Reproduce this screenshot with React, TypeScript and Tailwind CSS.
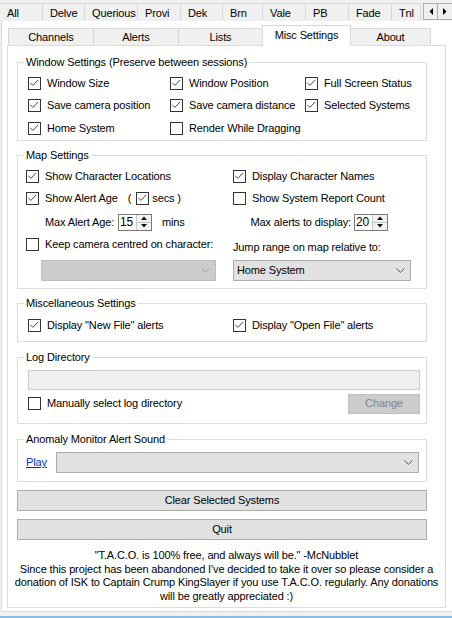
import React from "react";

const topTabs = [
  { label: "All", cls: "w-[43px]" },
  { label: "Delve", cls: "w-[42px]" },
  { label: "Querious", cls: "w-[53px]" },
  { label: "Provi", cls: "w-[43px]" },
  { label: "Dek", cls: "w-[42px]" },
  { label: "Brn", cls: "w-[40px]" },
  { label: "Vale", cls: "w-[43px]" },
  { label: "PB", cls: "w-[43px]" },
  { label: "Fade", cls: "w-[43px]" },
  { label: "Tnl", cls: "w-[29px]" },
];

function Check({ checked, label, className }: { checked?: boolean; label: string; className?: string }) {
  return (
    <div className={"flex items-center " + (className ?? "")}>
      <span className="flex h-[13px] w-[13px] shrink-0 border border-[#333333] bg-white">
        {checked && (
          <svg width="11" height="11" viewBox="0 0 11 11">
            <path d="M1.3 4.8 L3.9 7.4 L9.2 1.9" fill="none" stroke="#444444" strokeWidth="1" />
          </svg>
        )}
      </span>
      <span className="ml-[6px] whitespace-nowrap">{label}</span>
    </div>
  );
}

function Group({ title, className, children }: { title: string; className?: string; children: React.ReactNode }) {
  return (
    <fieldset className={"ml-[9px] w-[410px] border border-[#dcdcdc] " + (className ?? "")}>
      <legend className="ml-[6px] px-[2px] leading-[13px]">{title}</legend>
      {children}
    </fieldset>
  );
}

function Chevron({ color }: { color: string }) {
  return (
    <svg width="9" height="5" viewBox="0 0 9 5">
      <path d="M0.5 0.5 L4.5 4.3 L8.5 0.5" fill="none" stroke={color} strokeWidth="1" />
    </svg>
  );
}

function Spin({ value }: { value: string }) {
  return (
    <div className="flex h-[17px] w-[34px] shrink-0 border border-[#7a7a7a] bg-white">
      <span className="flex-1 pl-[1px] text-[12px] leading-[15px]">{value}</span>
      <div className="flex w-[15px] flex-col border-l border-[#c8c8c8]">
        <span className="flex flex-1 items-center justify-center border-b border-[#c8c8c8] bg-[#f2f2f2]">
          <svg width="6" height="4" viewBox="0 0 6 4">
            <path d="M0 4 L3 0.5 L6 4 Z" fill="#111" />
          </svg>
        </span>
        <span className="flex flex-1 items-center justify-center bg-[#f2f2f2]">
          <svg width="6" height="4" viewBox="0 0 6 4">
            <path d="M0 0 L3 3.5 L6 0 Z" fill="#111" />
          </svg>
        </span>
      </div>
    </div>
  );
}

function Button({ label }: { label: string }) {
  return (
    <div className="ml-[9px] mt-[8px] flex h-[21px] w-[410px] items-center justify-center border border-[#adadad] bg-[#e1e1e1]">
      {label}
    </div>
  );
}

export default function App() {
  return (
    <div className="h-[618px] w-[452px] overflow-hidden bg-[#f0f0f0] font-['Liberation_Sans',Arial,sans-serif] text-[11px] leading-[13px] tracking-[-0.13px] text-black">
      {/* character tabs */}
      <div className="flex h-[21px]">
        <div className="flex pt-[3px]">
          {topTabs.map((t) => (
            <div
              key={t.label}
              className={t.cls + " h-[18px] overflow-hidden whitespace-nowrap border-r border-t border-[#d9d9d9] pl-[7px] leading-[19px]"}
            >
              {t.label}
            </div>
          ))}
        </div>
        <div className="ml-[2px] mt-[3px] flex h-[17px] border border-[#adadad] bg-[#f0f0f0]">
          <span className="flex w-[14px] items-center justify-center border-r border-[#adadad]">
            <svg width="4" height="7" viewBox="0 0 4 7">
              <path d="M4 0 L0.5 3.5 L4 7 Z" fill="#000" />
            </svg>
          </span>
          <span className="flex w-[14px] items-center justify-center">
            <svg width="4" height="7" viewBox="0 0 4 7">
              <path d="M0 0 L3.5 3.5 L0 7 Z" fill="#000" />
            </svg>
          </span>
        </div>
      </div>

      {/* outer page */}
      <div className="ml-[1px] h-[591px] border-b border-l border-[#dcdcdc] bg-white pl-[5px] pt-[4px]">
        <div className="flex h-[20px] items-end pl-[1px]">
          <div className="h-[17px] w-[85px] border-l border-t border-[#d9d9d9] bg-[#f0f0f0] text-center leading-[17px]">Channels</div>
          <div className="h-[17px] w-[85px] border-l border-t border-[#d9d9d9] bg-[#f0f0f0] text-center leading-[17px]">Alerts</div>
          <div className="h-[17px] w-[84px] border-l border-t border-[#d9d9d9] bg-[#f0f0f0] text-center leading-[17px]">Lists</div>
          <div className="relative z-10 -mb-[1px] h-[21px] w-[89px] border-l border-r border-t border-[#d9d9d9] bg-white pt-[3px] text-center">
            Misc Settings
          </div>
          <div className="h-[17px] w-[80px] border-r border-t border-[#d9d9d9] bg-[#f0f0f0] text-center leading-[17px]">About</div>
        </div>

        {/* settings panel */}
        <div className="h-[563px] w-[439px] border border-[#dcdcdc] bg-white pt-[10px]">
          <Group title="Window Settings (Preserve between sessions)">
            <div className="grid grid-cols-[142px_135px_1fr] grid-rows-[22px_23px_22px] pb-[1px] pl-[10px] pt-[3px]">
              <Check checked label="Window Size" />
              <Check checked label="Window Position" />
              <Check checked label="Full Screen Status" />
              <Check checked label="Save camera position" />
              <Check checked label="Save camera distance" />
              <Check checked label="Selected Systems" />
              <Check checked label="Home System" />
              <Check label="Render While Dragging" />
            </div>
          </Group>

          <Group title="Map Settings" className="mt-[8px]">
            <div className="flex pb-[7px] pt-[3px]">
              <div className="flex w-[215px] flex-col pl-[8px]">
                <Check checked label="Show Character Locations" className="h-[22px]" />
                <div className="flex h-[22px] items-center">
                  <Check checked label="Show Alert Age" />
                  <span className="ml-[10px]">(</span>
                  <Check checked label="secs )" className="ml-[5px] [&>span:last-child]:ml-[3px]" />
                </div>
                <div className="mt-[2px] flex h-[22px] items-center pl-[19px]">
                  <span className="w-[73px] whitespace-nowrap">Max Alert Age:</span>
                  <Spin value="15" />
                  <span className="ml-[10px]">mins</span>
                </div>
                <Check label="Keep camera centred on character:" className="h-[22px]" />
                <div className="ml-[15px] mt-[5px] flex h-[21px] w-[175px] items-center justify-end border border-[#bfbfbf] bg-[#cccccc] pr-[5px]">
                  <Chevron color="#a0a0a0" />
                </div>
              </div>
              <div className="flex flex-col">
                <Check checked label="Display Character Names" className="h-[22px]" />
                <Check label="Show System Report Count" className="h-[22px]" />
                <div className="mt-[2px] flex h-[22px] items-center">
                  <span className="w-[121px] whitespace-nowrap pr-[3px] text-right">Max alerts to display:</span>
                  <Spin value="20" />
                </div>
                <div className="h-[27px] whitespace-nowrap pt-[8px]">Jump range on map relative to:</div>
                <div className="flex h-[21px] w-[178px] items-center justify-between border border-[#adadad] bg-[#e1e1e1] pl-[3px] pr-[5px]">
                  <span>Home System</span>
                  <Chevron color="#555555" />
                </div>
              </div>
            </div>
          </Group>

          <Group title="Miscellaneous Settings" className="mt-[8px]">
            <div className="flex pb-[5px] pl-[10px] pt-[4px]">
              <Check checked label={'Display "New File" alerts'} className="h-[22px] w-[205px]" />
              <Check checked label={'Display "Open File" alerts'} className="h-[22px]" />
            </div>
          </Group>

          <Group title="Log Directory" className="mt-[9px]">
            <div className="pb-[9px] pl-[10px] pr-[6px] pt-[6px]">
              <div className="h-[20px] w-[392px] border border-[#cccccc] bg-[#f0f0f0]" />
              <div className="mt-[3px] flex h-[21px] items-center justify-between">
                <Check label="Manually select log directory" />
                <div className="flex h-[20px] w-[72px] items-center justify-center border border-[#bfbfbf] bg-[#cccccc] text-[#838383]">
                  Change
                </div>
              </div>
            </div>
          </Group>

          <Group title="Anomaly Monitor Alert Sound" className="mt-[9px]">
            <div className="flex items-center pb-[8px] pl-[8px] pt-[6px]">
              <span className="w-[30px] text-[#0033cc] underline">Play</span>
              <div className="flex h-[21px] w-[363px] items-center justify-end border border-[#adadad] bg-[#e1e1e1] pr-[5px]">
                <Chevron color="#555555" />
              </div>
            </div>
          </Group>

          <Button label="Clear Selected Systems" />
          <Button label="Quit" />

          <p className="mt-[9px] text-center leading-[13.5px]">
            "T.A.C.O. is 100% free, and always will be." -McNubblet
            <br />
            Since this project has been abandoned I've decided to take it over so please consider a
            <br />
            donation of ISK to Captain Crump KingSlayer if you use T.A.C.O. regularly. Any donations
            <br />
            will be greatly appreciated :)
          </p>
        </div>
      </div>

      <div className="mt-[4px] h-[2px] bg-[#8fbbe3]" />
    </div>
  );
}
